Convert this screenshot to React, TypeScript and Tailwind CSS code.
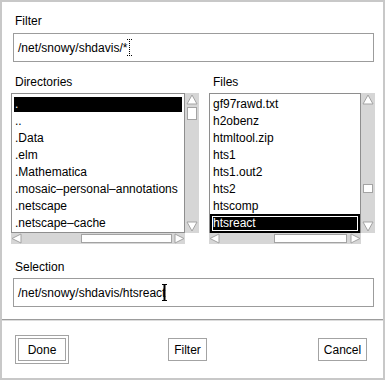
import React from "react";

const dirs = [
  ".",
  "..",
  ".Data",
  ".elm",
  ".Mathematica",
  ".mosaic–personal–annotations",
  ".netscape",
  ".netscape–cache",
];

const files = [
  "gf97rawd.txt",
  "h2obenz",
  "htmltool.zip",
  "hts1",
  "hts1.out2",
  "hts2",
  "htscomp",
  "htsreact",
];

function Arrow({ dir }: { dir: "up" | "down" | "left" | "right" }) {
  const pts = {
    up: "6,1 11,10 1,10",
    down: "1,1 11,1 6,10",
    left: "1,5.5 10,1 10,10",
    right: "1,1 10,5.5 1,10",
  }[dir];
  const vertical = dir === "up" || dir === "down";
  return (
    <svg
      width={vertical ? 12 : 11}
      height={vertical ? 11 : 11}
      viewBox={vertical ? "0 0 12 11" : "0 0 11 11"}
      className="shrink-0"
    >
      <polygon points={pts} fill="#ffffff" stroke="#a3a3a3" strokeWidth="1" />
    </svg>
  );
}

function VScroll({ top, size }: { top: number; size: number }) {
  return (
    <div className="flex w-[14px] flex-col items-center bg-[#d6d6d6] py-[1px]">
      <Arrow dir="up" />
      <div className="flex w-full flex-1 flex-col items-center">
        <div style={{ height: top }} />
        <div className="w-[10px] border border-[#a3a3a3] bg-white" style={{ height: size }} />
      </div>
      <Arrow dir="down" />
    </div>
  );
}

function HScroll({ left, size }: { left: number; size: number }) {
  return (
    <div className="flex h-[11px] flex-1 items-center bg-[#d6d6d6]">
      <Arrow dir="left" />
      <div className="flex h-full flex-1 items-center py-[1px]">
        <div style={{ width: left }} />
        <div className="h-full border border-[#a3a3a3] bg-white" style={{ width: size }} />
      </div>
      <Arrow dir="right" />
    </div>
  );
}

function IBeam({ dotted }: { dotted?: boolean }) {
  return (
    <svg width="5" height="17" viewBox="0 0 5 17" className="shrink-0">
      <line x1="0" y1="0.5" x2="5" y2="0.5" stroke="#000" strokeDasharray={dotted ? "1 1" : undefined} />
      <line x1="0" y1="16.5" x2="5" y2="16.5" stroke="#000" strokeDasharray={dotted ? "1 1" : undefined} />
      <line
        x1="2.5"
        y1="0"
        x2="2.5"
        y2="17"
        stroke="#000"
        strokeWidth={dotted ? 1 : 2}
        strokeDasharray={dotted ? "1 1" : undefined}
      />
    </svg>
  );
}

export default function App() {
  return (
    <div className="h-[380px] w-[386px] bg-white font-['Liberation_Sans',Arial,sans-serif] text-[12px] text-black">
      <div className="flex h-[380px] w-[385px] flex-col border-2 border-[#c8c8c8]">
        <div className="ml-[13px] mt-[11px] h-[16px] leading-[16px]">Filter</div>
        <div className="ml-[11px] mt-[4px] flex h-[29px] w-[361px] items-center border border-[#9c9c9c] pl-[4px]">
          <span>/net/snowy/shdavis/*</span>
          <IBeam dotted />
        </div>

        <div className="ml-[9px] mt-[12px] flex gap-[10px]">
          <div className="flex w-[188px] flex-col">
            <div className="h-[16px] pl-[4px] leading-[16px]">Directories</div>
            <div className="mt-[3px] flex h-[140px]">
              <div className="flex-1 border border-[#8e8e8e] bg-white pt-[2px]">
                {dirs.map((d, i) =>
                  i === 0 ? (
                    <div key={d} className="h-[17px] px-[2px] py-[1px]">
                      <div className="h-full bg-black pl-[1px] leading-[15px] text-white">{d}</div>
                    </div>
                  ) : (
                    <div key={d} className="h-[17px] whitespace-nowrap pl-[3px] leading-[17px]">
                      {d}
                    </div>
                  )
                )}
              </div>
              <VScroll top={2} size={13} />
            </div>
            <div className="flex">
              <HScroll left={59} size={91} />
              <div className="w-[14px]" />
            </div>
          </div>

          <div className="flex w-[166px] flex-col">
            <div className="h-[16px] pl-[4px] leading-[16px]">Files</div>
            <div className="mt-[3px] flex h-[140px]">
              <div className="flex-1 border border-[#8e8e8e] bg-white pt-[2px]">
                {files.map((f, i) =>
                  i === files.length - 1 ? (
                    <div
                      key={f}
                      className="-mt-[1px] h-[19px] bg-black pl-[3px] leading-[19px] text-white outline outline-1 outline-white outline-offset-[-3px]"
                    >
                      {f}
                    </div>
                  ) : (
                    <div key={f} className="h-[17px] whitespace-nowrap pl-[3px] leading-[17px]">
                      {f}
                    </div>
                  )
                )}
              </div>
              <VScroll top={79} size={9} />
            </div>
            <div className="flex">
              <HScroll left={54} size={73} />
              <div className="w-[14px]" />
            </div>
          </div>
        </div>

        <div className="ml-[13px] mt-[15px] h-[16px] leading-[16px]">Selection</div>
        <div className="ml-[11px] mt-[3px] flex h-[29px] w-[361px] items-center border border-[#9c9c9c] pl-[4px]">
          <span>/net/snowy/shdavis/htsreact</span>
          <span className="-ml-[3px] flex">
            <IBeam />
          </span>
        </div>

        <div className="mt-[12px] h-[2px] border-b border-t border-b-[#dcdcdc] border-t-[#9c9c9c]" />

        <div className="mt-[14px] flex items-center pl-[13px]">
          <div className="h-[29px] w-[54px] border border-[#a3a3a3] p-[2px]">
            <div className="flex h-full w-full items-center justify-center border border-[#a3a3a3] bg-white">
              Done
            </div>
          </div>
          <div className="ml-[99px] flex h-[23px] w-[39px] items-center justify-center border border-[#a3a3a3] bg-white">
            Filter
          </div>
          <div className="ml-[111px] flex h-[23px] w-[49px] items-center justify-center border border-[#a3a3a3] bg-white">
            Cancel
          </div>
        </div>
      </div>
    </div>
  );
}
